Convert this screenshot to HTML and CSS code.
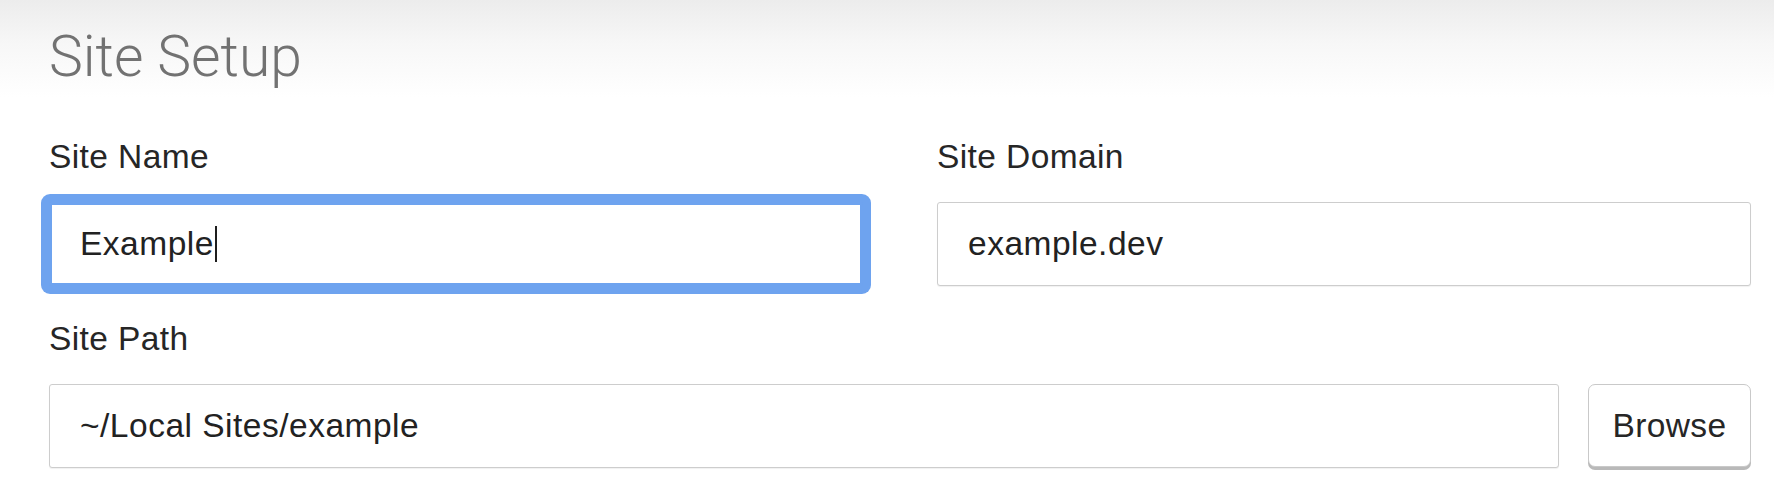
FILE: index.html
```html
<!DOCTYPE html>
<html lang="en">
<head>
<meta charset="utf-8">
<title>Site Setup</title>
<link rel="stylesheet" href="styles.css">
</head>
<body>
<header class="header">
  <h1 class="title">Site Setup</h1>
</header>
<main class="form">
  <div class="row-two">
    <div class="field">
      <div class="label">Site Name</div>
      <div class="input input-focused"><span class="value">Example</span><span class="caret"></span></div>
    </div>
    <div class="field">
      <div class="label">Site Domain</div>
      <div class="input"><span class="value">example.dev</span></div>
    </div>
  </div>
  <div class="field field-path">
    <div class="label">Site Path</div>
    <div class="path-row">
      <div class="input input-grow"><span class="value">~/Local Sites/example</span></div>
      <button class="btn" type="button">Browse</button>
    </div>
  </div>
</main>
</body>
</html>
```

FILE: styles.css
```css
html, body {
  margin: 0;
  padding: 0;
  background: #ffffff;
}
body {
  width: 1774px;
  height: 497px;
  overflow: hidden;
  font-family: "Liberation Sans", Arial, Helvetica, sans-serif;
  color: #333333;
}
.header {
  padding: 30px 0 13px 49px;
  background: linear-gradient(to bottom, #ececec 0%, #f7f7f7 45%, #ffffff 100%);
}
.title {
  margin: 0;
  font-family: Roboto, "Liberation Sans", Arial, sans-serif;
  font-size: 57px;
  line-height: 54px;
  font-weight: 300;
  color: #727272;
  letter-spacing: 0;
}
.form {
  padding: 40px 23px 0 49px;
}
.row-two {
  display: grid;
  grid-template-columns: 814px 814px;
  column-gap: 74px;
}
.field-path {
  margin-top: 33px;
}
.label {
  font-size: 33.5px;
  line-height: 40px;
  letter-spacing: 0.4px;
  color: #262626;
  margin-bottom: 25px;
}
.input {
  box-sizing: border-box;
  height: 84px;
  display: flex;
  align-items: center;
  padding: 0 20px 0 30px;
  border: 1px solid #cdcdcd;
  border-radius: 3px;
  background: #ffffff;
  box-shadow: 0 1px 1px rgba(0, 0, 0, 0.06);
  font-size: 33.5px;
  letter-spacing: 0.5px;
  color: #222222;
}
.input-focused {
  border: 3px solid #6ea3ef;
  padding-left: 28px;
  box-shadow: 0 0 0 8px #6ea3ef;
  border-radius: 3px;
}
.caret {
  display: inline-block;
  width: 2px;
  height: 36px;
  background: #1e1e1e;
  margin-left: 1px;
}
.path-row {
  display: flex;
  gap: 29px;
}
.input-grow {
  flex: 1;
}
.btn {
  box-sizing: border-box;
  width: 163px;
  height: 83px;
  padding: 0;
  border: 1px solid #c9c9c9;
  border-radius: 7px;
  background: #ffffff;
  box-shadow: 0 3px 0 #b9b9b9;
  font-family: "Liberation Sans", Arial, Helvetica, sans-serif;
  font-size: 33.5px;
  letter-spacing: 0.4px;
  color: #262626;
}
```
